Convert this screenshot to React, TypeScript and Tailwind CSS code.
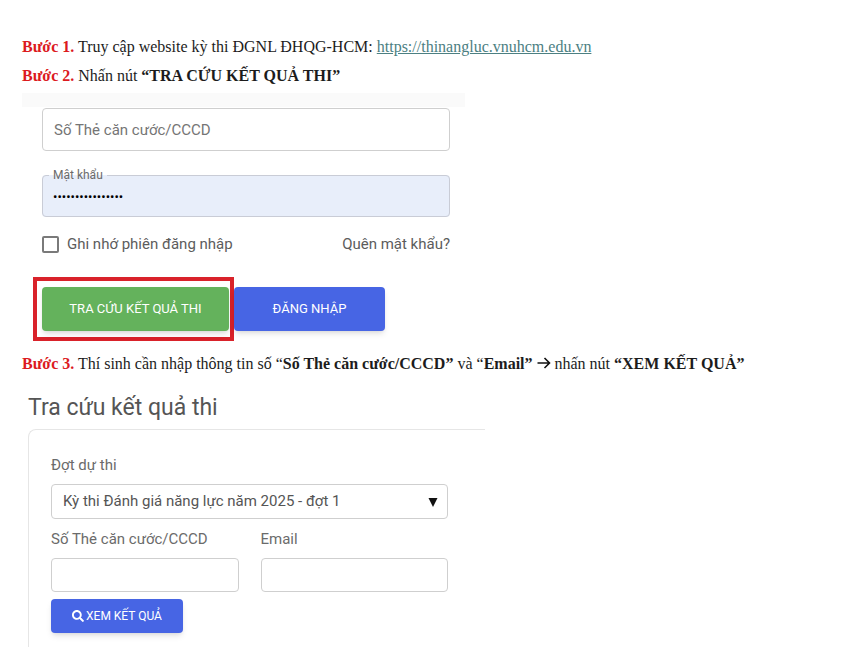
import type { ReactNode } from "react";
import { FaSearch } from "react-icons/fa";

function Step({ label, children }: { label: string; children: ReactNode }) {
  return (
    <p className="font-['Liberation_Serif','Times_New_Roman',serif] text-base leading-[29px] text-[#1c1c1c]">
      <strong className="text-[#dc1a1e]">{label}</strong> {children}
    </p>
  );
}

function ArrowRight() {
  return (
    <svg
      viewBox="0 0 14 12"
      className="inline-block h-3 w-[14px] align-baseline"
      fill="none"
      stroke="#111"
      strokeWidth="1.6"
      aria-label="→"
      role="img"
    >
      <path d="M0.5 6h12M7.5 1l5 5-5 5" />
    </svg>
  );
}

const outlined = "rounded border border-[#cfcfcf] bg-white";

function LoginForm() {
  return (
    <section className="w-full max-w-[443px]">
      <div className="h-[14px] bg-[#fafafa]" />
      <form className="flex flex-col pl-5 pr-[15px] pt-px" onSubmit={(e) => e.preventDefault()}>
        <input
          type="text"
          aria-label="Số Thẻ căn cước/CCCD"
          placeholder="Số Thẻ căn cước/CCCD"
          className={`${outlined} h-[43px] w-full px-[11px] text-[15px] text-[#555] placeholder:text-[#757575]`}
        />
        <fieldset className="mt-4 h-[50px] rounded border border-[#c9ccd6] bg-[#e8eefa] px-[6px]">
          <legend className="px-1 text-xs leading-4 text-[#6b6b6b]">
            <label htmlFor="password">Mật khẩu</label>
          </legend>
          <input
            id="password"
            type="password"
            defaultValue="0123456789abcdef"
            className="block h-[26px] w-full bg-transparent px-1 text-[13px] text-black outline-none"
          />
        </fieldset>
        <div className="mt-4 flex items-center justify-between text-[15px] leading-[22px] text-[#5c5c5c]">
          <label className="flex items-center gap-2">
            <input
              type="checkbox"
              className="size-[17px] appearance-none rounded-xs border-2 border-[#7a7a7a] bg-white"
            />
            Ghi nhớ phiên đăng nhập
          </label>
          <a href="#forgot">Quên mật khẩu?</a>
        </div>
        <div className="-ml-[9px] mt-[22px] flex items-center">
          <div className="border-4 border-[#d9222a] py-[6px] pl-[5px] pr-px">
            <button
              type="button"
              className="h-11 w-[187px] rounded bg-[#64b25c] text-[13px] text-white shadow-md"
            >
              TRA CỨU KẾT QUẢ THI
            </button>
          </div>
          <button type="submit" className="h-11 w-[151px] rounded bg-[#4765e4] text-[13px] text-white shadow-md">
            ĐĂNG NHẬP
          </button>
        </div>
      </form>
    </section>
  );
}

function ResultLookup() {
  return (
    <section className="ml-[6px] w-full max-w-[457px]">
      <h1 className="text-[23px] leading-8 text-[#555]">Tra cứu kết quả thi</h1>
      <form
        className="mt-[5px] rounded-tl-lg border-l border-t border-[#e6e6e6] pb-[14px] pl-[22px] pr-[37px] pt-6 text-[15px] text-[#6b6b6b]"
        onSubmit={(e) => e.preventDefault()}
      >
        <label htmlFor="round" className="block leading-[22px]">
          Đợt dự thi
        </label>
        <div className="relative mt-2">
          <select
            id="round"
            className={`${outlined} h-[35px] w-full appearance-none px-[11px] text-[#555]`}
          >
            <option>Kỳ thi Đánh giá năng lực năm 2025 - đợt 1</option>
          </select>
          <svg
            viewBox="0 0 10 9"
            className="pointer-events-none absolute right-[10px] top-[14px] h-[9px] w-[10px]"
            aria-hidden="true"
          >
            <path d="M0.5 0h9L5 9z" fill="#111" />
          </svg>
        </div>
        <div className="mt-[9px] grid grid-cols-2 gap-[22px]">
          <div>
            <label htmlFor="citizen-id" className="block leading-[22px]">
              Số Thẻ căn cước/CCCD
            </label>
            <input id="citizen-id" type="text" className={`${outlined} mt-2 block h-[34px] w-full px-2`} />
          </div>
          <div>
            <label htmlFor="email" className="block leading-[22px]">
              Email
            </label>
            <input id="email" type="email" className={`${outlined} mt-2 block h-[34px] w-full px-2`} />
          </div>
        </div>
        <button
          type="submit"
          className="mt-[7px] flex h-[34px] w-[132px] items-center justify-center gap-[2px] rounded bg-[#4765e4] text-xs text-white shadow-md"
        >
          <FaSearch className="size-3" aria-hidden="true" />
          XEM KẾT QUẢ
        </button>
      </form>
    </section>
  );
}

export default function App() {
  return (
    <main className="min-h-screen bg-white px-[22px] pt-8 font-['Roboto',sans-serif]">
      <Step label="Bước 1.">
        Truy cập website kỳ thi ĐGNL ĐHQG-HCM:{" "}
        <a href="https://thinangluc.vnuhcm.edu.vn" className="text-[#4c8082] underline">
          https://thinangluc.vnuhcm.edu.vn
        </a>
      </Step>
      <Step label="Bước 2.">
        Nhấn nút <strong>“TRA CỨU KẾT QUẢ THI”</strong>
      </Step>
      <div className="mt-[3px]">
        <LoginForm />
      </div>
      <div className="mb-[14px] mt-2">
        <Step label="Bước 3.">
          Thí sinh cần nhập thông tin số “<strong>Số Thẻ căn cước/CCCD”</strong> và “
          <strong>Email”</strong> <ArrowRight /> nhấn nút <strong>“XEM KẾT QUẢ”</strong>
        </Step>
      </div>
      <ResultLookup />
    </main>
  );
}
